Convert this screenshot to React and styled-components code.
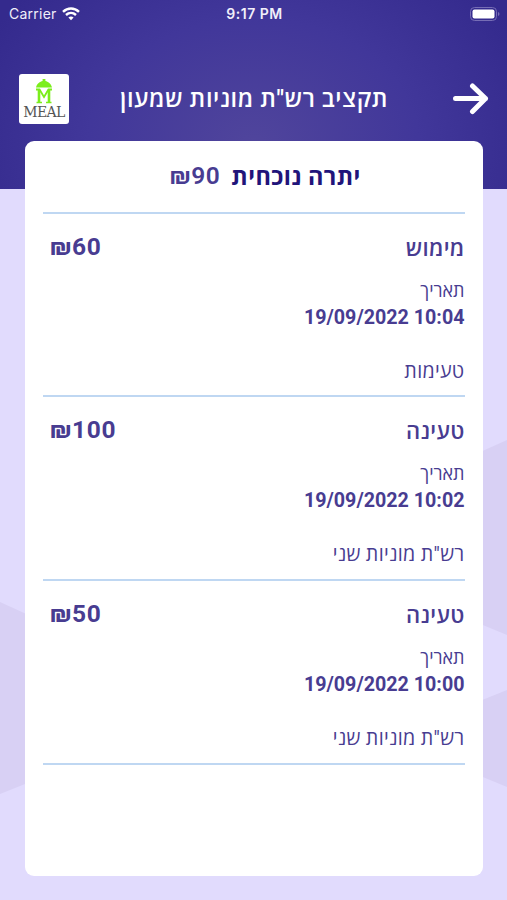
import React from "react";
import styled, { createGlobalStyle } from "styled-components";

const GlobalStyle = createGlobalStyle`
    * {
        box-sizing: border-box;
    }

    body {
        margin: 0;
        font-family: Roboto, "Open Sans", sans-serif;
    }
`;

const Screen = styled.div`
    position: relative;
    width: 507px;
    height: 900px;
    overflow: hidden;
    background-color: #e1dbfd;
`;

const Pattern = styled.svg`
    position: absolute;
    inset: 0;
`;

const Top = styled.div`
    position: relative;
    height: 189px;
    background: radial-gradient(ellipse 300px 230px at 50% 145px, #50459c 0%, #41379a 55%, #342a8d 100%);
`;

const StatusBar = styled.div`
    display: grid;
    grid-template-columns: 1fr auto 1fr;
    align-items: center;
    height: 27px;
    padding: 0 7px 0 9px;
    color: #f1effa;
    font-family: Inter, sans-serif;
    font-size: 14px;
`;

const Carrier = styled.div`
    display: flex;
    align-items: center;
    gap: 5px;
    letter-spacing: 0.25px;
`;

const Time = styled.div`
    font-weight: 600;
    font-size: 14px;
    letter-spacing: 0.5px;
`;

const BatteryIcon = styled.svg`
    justify-self: end;
`;

const Header = styled.header`
    display: flex;
    align-items: center;
    justify-content: space-between;
    height: 50px;
    margin-top: 47px;
    padding: 0 18px 0 19px;
`;

const Logo = styled.div`
    display: flex;
    flex-direction: column;
    align-items: center;
    width: 50px;
    height: 50px;
    padding-top: 4px;
    border-radius: 3px;
    background-color: #fff;
`;

const LogoText = styled.span`
    margin-top: 1px;
    color: #555;
    font-family: "DejaVu Serif", serif;
    font-size: 14px;
    line-height: 15px;
    letter-spacing: -0.6px;
`;

const Title = styled.h1`
    margin: 0;
    padding: 0 14px 2px 0;
    color: #fff;
    font-size: 23.5px;
    font-weight: 600;
    letter-spacing: 0.6px;
    white-space: nowrap;
`;

const Card = styled.main`
    position: relative;
    width: 458px;
    height: 735px;
    margin: -48px 0 0 25px;
    padding: 0 18.5px 0 18px;
    border-radius: 9px;
    background-color: #fff;
`;

const Balance = styled.div`
    display: flex;
    justify-content: center;
    align-items: center;
    gap: 11px;
    height: 72.5px;
    padding: 0 0 1px 23px;
    border-bottom: 2px solid #bfd7f2;
    color: #483c91;
    font-size: 24.5px;
    font-weight: 600;
    letter-spacing: 0.6px;
`;

const BalanceLabel = styled.span`
    color: #21147a;
    font-size: 23.5px;
    font-weight: 700;
    letter-spacing: 0.4px;
`;

const Row = styled.section`
    height: 183.7px;
    padding-top: 19px;
    border-bottom: 2px solid #bfd7f2;
    color: #483c91;
`;

const RowHead = styled.div`
    display: flex;
    justify-content: space-between;
    height: 32px;
    padding-left: 7px;
    line-height: 32px;
`;

const Amount = styled.span`
    font-size: 24.5px;
    font-weight: 700;
    line-height: 28px;
    letter-spacing: 0.7px;
`;

const Kind = styled.span`
    font-size: 22px;
    font-weight: 600;
    letter-spacing: 0.3px;
`;

const Line = styled.div`
    height: 27px;
    margin-top: ${({ $gap }) => $gap || 0}px;
    font-size: ${({ $size }) => $size || 18}px;
    font-weight: ${({ $bold }) => ($bold ? 700 : 400)};
    letter-spacing: ${({ $spacing }) => $spacing || 0}px;
    line-height: 27px;
    text-align: right;
`;

const transactions = [
    { kind: "מימוש", amount: "₪60", date: "19/09/2022 10:04", note: "טעימות" },
    { kind: "טעינה", amount: "₪100", date: "19/09/2022 10:02", note: "רש\"ת מוניות שני" },
    { kind: "טעינה", amount: "₪50", date: "19/09/2022 10:00", note: "רש\"ת מוניות שני" },
];

const Wifi = () => (
    <svg width="18" height="14" viewBox="0 0 18 14" fill="none" stroke="#fff" strokeWidth="2.4">
        <path d="M1 4.8C5.7.3 12.3.3 17 4.8" />
        <path d="M4 8c3-2.8 7-2.8 10 0" />
        <path d="M6.4 10.5c1.7-1.4 3.5-1.4 5.2 0L9 13.2z" fill="#fff" stroke="none" />
    </svg>
);

const Battery = () => (
    <BatteryIcon width="30" height="14" viewBox="0 0 30 14">
        <rect x=".5" y=".5" width="26" height="13" rx="4" fill="none" stroke="#766db5" />
        <rect x="2.5" y="2.5" width="22" height="9" rx="2" fill="#fff" />
        <path d="M28 5c2 .8 2 3.2 0 4z" fill="#766db5" />
    </BatteryIcon>
);

const MealMark = () => (
    <svg width="18" height="26" viewBox="0 0 18 26" fill="none" stroke="#7bee1c">
        <path d="M1 9.5C2 5.5 5 3.500 7.600 3V1h2.800v2c2.600.5 5.600 2.500 6.600 6.500z" fill="#7bee1c" stroke="none" />
        <path d="M1 11.5h3.5L9 19l4.5-7.5H17" strokeWidth="1.8" />
        <path d="M4 11.5V24M14 11.5V24" strokeWidth="2.6" />
        <path d="M1.5 24.5H7M11 24.5h5.5" strokeWidth="1.6" />
    </svg>
);

const BackArrow = () => (
    <svg width="36" height="32" viewBox="0 0 36 32" fill="none" stroke="#fff" strokeWidth="5" strokeLinecap="round" strokeLinejoin="round">
        <path d="M2.5 15.5h30M19.5 3l13 12.5-13 13" />
    </svg>
);

const App = () => (
    <Screen>
        <GlobalStyle />
        <Pattern width="507" height="900" fill="#d8d0f4">
            <path d="M0 602L90 643V758L0 794z" />
            <path d="M507 440L420 479V599L507 635z" />
            <path d="M507 690L420 725V751L507 787z" />
        </Pattern>
        <Top>
            <StatusBar>
                <Carrier>
                    Carrier
                    <Wifi />
                </Carrier>
                <Time>9:17 PM</Time>
                <Battery />
            </StatusBar>
            <Header>
                <Logo>
                    <MealMark />
                    <LogoText>MEAL</LogoText>
                </Logo>
                <Title dir="rtl">תקציב רש"ת מוניות שמעון</Title>
                <BackArrow />
            </Header>
        </Top>
        <Card>
            <Balance>
                <span>₪90</span>
                <BalanceLabel dir="rtl">יתרה נוכחית</BalanceLabel>
            </Balance>
            {transactions.map((item) => (
                <Row key={item.date}>
                    <RowHead>
                        <Amount>{item.amount}</Amount>
                        <Kind>{item.kind}</Kind>
                    </RowHead>
                    <Line $gap={12}><bdi>תאריך</bdi></Line>
                    <Line $bold $size={19.7}>{item.date}</Line>
                    <Line $gap={27} $size={19.7} $spacing={0.3}><bdi>{item.note}</bdi></Line>
                </Row>
            ))}
        </Card>
    </Screen>
);

export default App;
